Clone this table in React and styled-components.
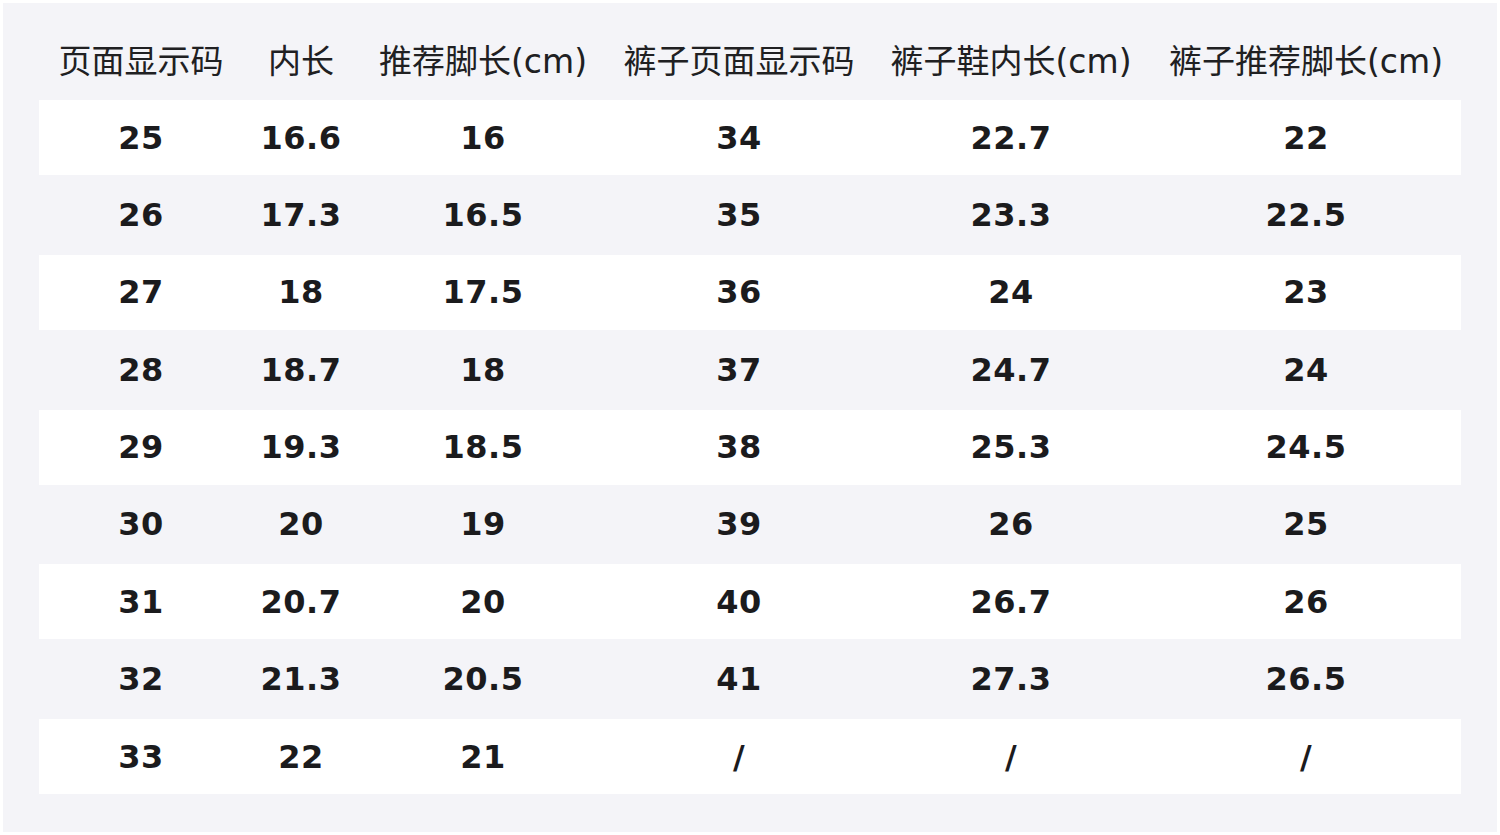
import React from 'react'
import styled, { createGlobalStyle } from 'styled-components';

const GlobalStyle = createGlobalStyle`
  html, body {
    margin: 0;
    padding: 0;
    background: #ffffff;
  }
  body {
    font-family: "DejaVu Sans", "Noto Sans CJK SC", sans-serif;
  }
  #root {
    padding: 3px;
  }
`;

const PANEL = styled.div`
  width: 1494px;
  height: 829px;
  background: #f4f4f8;
  padding: 20px 0 0 36px;
  box-sizing: border-box;
`;

const TABLE = styled.div`
  width: 1422px;
  display: grid;
  grid-template-columns: 204px 116px 248px 264px 280px 310px;
`;

const HEAD = styled.div`
  height: 77px;
  box-sizing: border-box;
  padding-bottom: 6px;
  display: flex;
  align-items: center;
  justify-content: center;
  white-space: nowrap;
  font-size: 33px;
  color: #202022;
  font-family: "DejaVu Sans", "Noto Sans CJK SC", sans-serif;
`;

const CELL = styled.div`
  height: ${p => (p.$light ? '75px' : '79.75px')};
  background: ${p => (p.$light ? '#ffffff' : 'transparent')};
  display: flex;
  align-items: center;
  justify-content: center;
  font-size: 32px;
  font-weight: bold;
  color: #1b1b1d;
  letter-spacing: 0.5px;
`;

const headers = ['页面显示码', '内长', '推荐脚长(cm)', '裤子页面显示码', '裤子鞋内长(cm)', '裤子推荐脚长(cm)'];

const rows = [
  ['25', '16.6', '16', '34', '22.7', '22'],
  ['26', '17.3', '16.5', '35', '23.3', '22.5'],
  ['27', '18', '17.5', '36', '24', '23'],
  ['28', '18.7', '18', '37', '24.7', '24'],
  ['29', '19.3', '18.5', '38', '25.3', '24.5'],
  ['30', '20', '19', '39', '26', '25'],
  ['31', '20.7', '20', '40', '26.7', '26'],
  ['32', '21.3', '20.5', '41', '27.3', '26.5'],
  ['33', '22', '21', '/', '/', '/'],
];

const App = () => {
  return (
    <>
      <GlobalStyle />
      <PANEL>
        <TABLE>
          {headers.map(h => <HEAD key={h}>{h}</HEAD>)}
          {rows.map((row, i) =>
            row.map((v, j) => (
              <CELL key={`${i}-${j}`} $light={i % 2 === 0}>{v}</CELL>
            ))
          )}
        </TABLE>
      </PANEL>
    </>
  )
}

export default App
